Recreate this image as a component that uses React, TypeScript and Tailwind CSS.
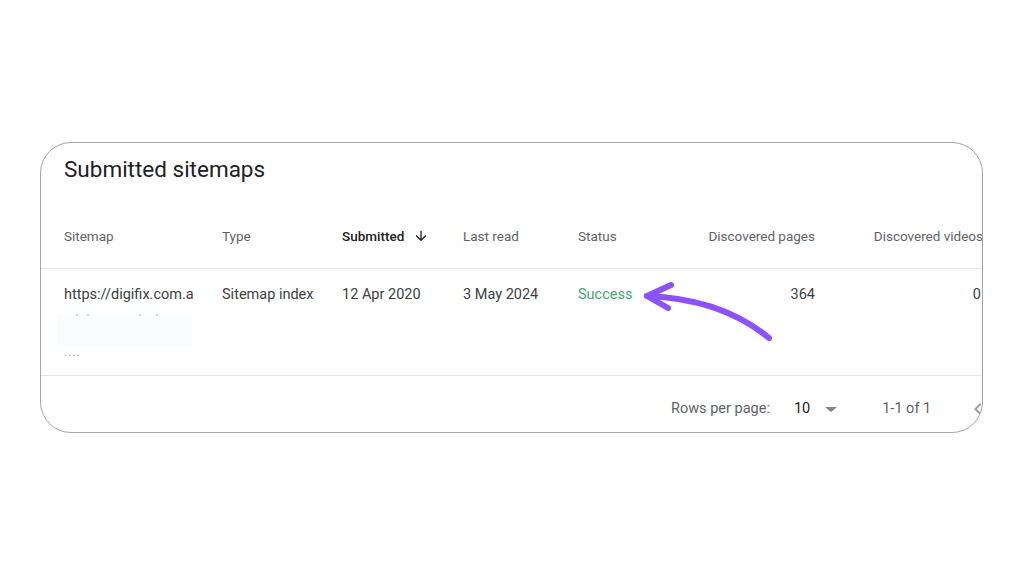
import React from 'react';

const font = { fontFamily: 'Roboto, "Liberation Sans", Arial, sans-serif' };

function ArrowDown() {
  return (
    <svg width="16" height="16" viewBox="0 0 24 24" className="fill-[#202124]">
      <path d="M20 12l-1.41-1.41L13 16.17V4h-2v12.17l-5.58-5.59L4 12l8 8 8-8z" />
    </svg>
  );
}

function ChevronLeft() {
  return (
    <svg width="24" height="24" viewBox="0 0 24 24" className="fill-[#9aa0a6]">
      <path d="M15.41 7.41L14 6l-6 6 6 6 1.41-1.41L10.83 12z" />
    </svg>
  );
}

// hand-drawn pointer from the bottom right to the status cell
function PurpleArrow() {
  return (
    <svg className="absolute left-0 top-0 pointer-events-none" width="1024" height="576" viewBox="0 0 1024 576">
      <g fill="none" stroke="#8c52ff" strokeWidth="6" strokeLinecap="round" strokeLinejoin="round">
        <path d="M769 338 C740 314 700 298 647 296" />
        <path d="M671 285 L647 296 L668 308" />
      </g>
    </svg>
  );
}

export default function App() {
  return (
    <div className="relative h-[576px] w-[1024px] bg-white" style={font}>
      <div className="pl-[40px] pt-[142px]">
        <div className="h-[291px] w-[943px] overflow-hidden rounded-[31px] border border-[#a6a6a6] bg-white">
          <h1 className="pl-[23px] pt-[12px] text-[22.5px] leading-[28px] text-[#202124]">Submitted sitemaps</h1>

          {/* header row */}
          <div className="flex h-[86px] items-end border-b border-[#e6e6e6] pb-[24px] text-[13.5px] leading-[16px] text-[#5f6368]">
            <div className="w-[23px] shrink-0" />
            <div className="w-[158px] shrink-0">Sitemap</div>
            <div className="w-[120px] shrink-0">Type</div>
            <div className="flex w-[121px] shrink-0 items-center gap-[9px] font-medium text-[#202124]">
              Submitted <ArrowDown />
            </div>
            <div className="w-[115px] shrink-0">Last read</div>
            <div className="w-[90px] shrink-0">Status</div>
            <div className="w-[147px] shrink-0 text-right">Discovered pages</div>
            <div className="w-[168px] shrink-0 whitespace-nowrap text-right">Discovered videos</div>
          </div>

          {/* data row */}
          <div className="flex h-[107px] border-b border-[#e6e6e6] pt-[16px] text-[14.5px] leading-[20px] text-[#3c4043]">
            <div className="w-[23px] shrink-0" />
            <div className="flex w-[158px] shrink-0 flex-col">
              <span className="whitespace-nowrap">https://digifix.com.a</span>
              <div className="relative -ml-[7px] mt-[9px] h-[32px] w-[136px] bg-[#fbfcfd]">
                <span className="absolute left-[19px] top-0 h-[2px] w-[2px] bg-[#d5d8dc]" />
                <span className="absolute left-[30px] top-0 h-[2px] w-[2px] bg-[#d5d8dc]" />
                <span className="absolute left-[82px] top-0 h-[2px] w-[2px] bg-[#d5d8dc]" />
                <span className="absolute left-[99px] top-0 h-[2px] w-[2px] bg-[#d5d8dc]" />
              </div>
              <span className="mt-[1px] text-[12px] leading-[10px] tracking-[1px] text-[#9aa0a6]">....</span>
            </div>
            <div className="w-[120px] shrink-0 whitespace-nowrap">Sitemap index</div>
            <div className="w-[121px] shrink-0 whitespace-nowrap">12 Apr 2020</div>
            <div className="w-[115px] shrink-0 whitespace-nowrap">3 May 2024</div>
            <div className="w-[90px] shrink-0 text-[#45a672]">Success</div>
            <div className="w-[147px] shrink-0 text-right">364</div>
            <div className="w-[166px] shrink-0 text-right">0</div>
          </div>

          {/* pagination */}
          <div className="flex h-[56px] items-center pl-[630px] pt-[10px] text-[14.5px] leading-[20px] text-[#5f6368]">
            <span className="whitespace-nowrap">Rows per page:</span>
            <span className="ml-[24px] text-[#202124]">10</span>
            <span className="ml-[15px] h-0 w-0 border-x-[6px] border-t-[5px] border-x-transparent border-t-[#80868b]" />
            <span className="ml-[45px] whitespace-nowrap">1-1 of 1</span>
            <span className="ml-[35px] shrink-0">
              <ChevronLeft />
            </span>
          </div>
        </div>
      </div>
      <PurpleArrow />
    </div>
  );
}
